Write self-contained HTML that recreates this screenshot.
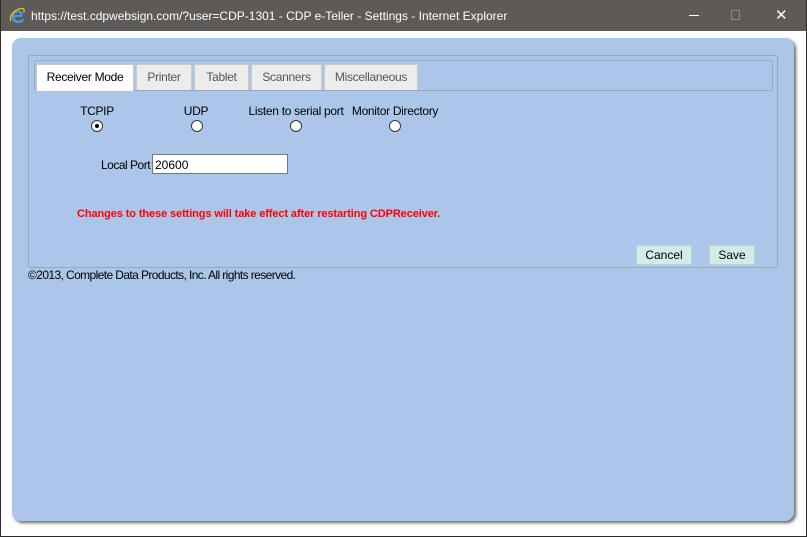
<!DOCTYPE html>
<html><head><style>
*{margin:0;padding:0;box-sizing:border-box}
body{width:807px;height:537px;background:#2b2b2b;position:relative;overflow:hidden;font-family:"Liberation Sans",Arial,sans-serif;font-size:12px;color:#000}
.win{position:absolute;left:1px;top:0;width:805px;height:536px;background:#fff}
.title{position:absolute;left:1px;top:0;width:805px;height:31px;background:#5e5a57;color:#fff;font-size:12px}
.title .t{position:absolute;left:30px;top:9px}
.panel{position:absolute;left:12px;top:38px;width:782px;height:483px;background:#abc6e9;border-radius:9px;box-shadow:2px 2px 3px rgba(0,0,0,.6)}
.abs{position:absolute}
.tab{position:absolute;top:64px;height:26px;background:#ececec;border:1px solid #c8c8c8;border-bottom:none;text-align:center;line-height:25px;color:#555;font-size:12px;letter-spacing:-0.3px}
.radio{position:absolute;width:12px;height:12px;border:1px solid #333;border-radius:50%;background:#fff}
.btn{position:absolute;top:245px;height:20px;background:#d3ebe8;border:1px solid #c0d0d0;text-align:center;line-height:18px;font-size:12px}
.lbl{position:absolute;font-size:12px;letter-spacing:-0.3px;transform:translateX(-50%);white-space:nowrap}
</style></head><body>
<div class="win"></div>
<div class="title">
<svg class="abs" style="left:8px;top:7px" width="16" height="17" viewBox="0 0 16 17"><path d="M13 10H5.5c.2 2.5 2 3.7 4 3.7 1.6 0 2.6-.6 3.3-1.6h2.6c-1 2.6-3.3 4-6 4C5.4 16.1 3 13.6 3 10S5.4 3.6 9 3.6 14.7 6.200 13 10zM5.5 8h6c-.2-1.800-1.400-2.600-3-2.600S5.700 6.300 5.500 8z" fill="#3ea0e6"/><path d="M2 14C0 10 4 3 12 1.500 15 1 16 3 14.500 5.500" stroke="#f5c400" stroke-width="1.300" fill="none"/></svg>
<span class="t">https://test.cdpwebsign.com/?user=CDP-1301 - CDP e-Teller - Settings - Internet Explorer</span>
<span class="abs" style="left:688px;top:15px;width:10px;height:1px;background:#fff"></span>
<span class="abs" style="left:730px;top:10px;width:9px;height:10px;border:1px solid #888"></span>
<span class="abs" style="left:774px;top:6px;font-size:15px;color:#fff">✕</span>
</div>
<div class="panel"></div>
<div class="abs" style="left:28px;top:55px;width:750px;height:213px;border:1px solid #98a8b8;border-radius:3px"></div>
<div class="abs" style="left:34px;top:60px;width:739px;height:31px;border:1px solid #98a8b8;border-radius:3px"></div>
<div class="tab" style="left:36px;width:98px;background:#fff;color:#000;height:27px">Receiver Mode</div>
<div class="tab" style="left:136px;width:56px">Printer</div>
<div class="tab" style="left:194px;width:55px">Tablet</div>
<div class="tab" style="left:251px;width:71px">Scanners</div>
<div class="tab" style="left:324px;width:94px">Miscellaneous</div>
<div class="lbl" style="left:97px;top:104px">TCPIP</div>
<div class="lbl" style="left:196px;top:104px">UDP</div>
<div class="lbl" style="left:296px;top:104px">Listen to serial port</div>
<div class="lbl" style="left:395px;top:104px">Monitor Directory</div>
<div class="radio" style="left:91px;top:120px"><span class="abs" style="left:3px;top:3px;width:4px;height:4px;border-radius:50%;background:#000"></span></div>
<div class="radio" style="left:191px;top:120px"></div>
<div class="radio" style="left:290px;top:120px"></div>
<div class="radio" style="left:389px;top:120px"></div>
<div class="abs" style="left:101px;top:158px;font-size:12px;letter-spacing:-0.5px">Local Port</div>
<div class="abs" style="left:152px;top:154px;width:136px;height:20px;background:#fff;border:1px solid #777;padding:3px 0 0 2px;font-size:12px">20600</div>
<div class="abs" style="left:77px;top:208px;color:#f00;font-weight:bold;font-size:11px;letter-spacing:-0.1px">Changes to these settings will take effect after restarting CDPReceiver.</div>
<div class="btn" style="left:636px;width:56px">Cancel</div>
<div class="btn" style="left:709px;width:46px">Save</div>
<div class="abs" style="left:28px;top:268px;font-size:12px;letter-spacing:-0.6px">©2013, Complete Data Products, Inc. All rights reserved.</div>
</body></html>
